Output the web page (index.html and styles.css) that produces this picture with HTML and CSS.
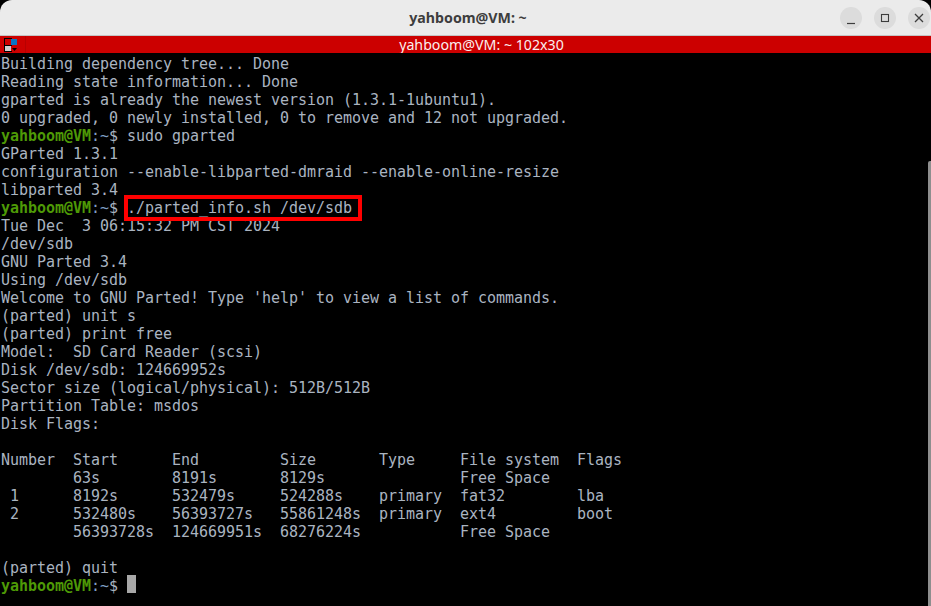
FILE: index.html
```html
<!DOCTYPE html>
<html lang="en">
<head>
<meta charset="utf-8">
<title>yahboom@VM: ~</title>
<link rel="stylesheet" href="styles.css">
</head>
<body>
<div class="window">
  <header class="titlebar">
    <div class="title">yahboom@VM: ~</div>
    <div class="controls">
      <button class="ctl"><svg width="16" height="16" viewBox="0 0 16 16"><path d="M4 13.5h8" stroke="#3d3d3d" stroke-width="1.2" fill="none"/></svg></button>
      <button class="ctl"><svg width="16" height="16" viewBox="0 0 16 16"><rect x="4.5" y="4.5" width="7" height="7" stroke="#3d3d3d" stroke-width="1.1" fill="none"/></svg></button>
      <button class="ctl"><svg width="16" height="16" viewBox="0 0 16 16"><path d="M4 4l8 8M12 4l-8 8" stroke="#3d3d3d" stroke-width="1.3" fill="none"/></svg></button>
    </div>
  </header>
  <div class="tabbar">
    <svg class="menu-icon" width="14" height="14" viewBox="0 0 14 14"><path d="M0 0h8v1H1v6h6v6h1v1H0z" fill="#000"/><path d="M1 7h7v1H1z" fill="#000"/><rect x="1" y="1" width="6" height="6" fill="#cc0000"/><rect x="7" y="1" width="6" height="6" fill="#0a74c4"/><rect x="1" y="8" width="6" height="5" fill="#cfcfcf"/><path d="M8 10h5l-2.5 3z" fill="#000"/></svg>
    <span class="tab-sep"></span>
    <span class="tab-title">yahboom@VM: ~ 102x30</span>
  </div>
  <main class="terminal">
    <div class="scrollbar"></div>
    <div class="output">
      <div class="line">Building dependency tree... Done</div>
      <div class="line">Reading state information... Done</div>
      <div class="line">gparted is already the newest version (1.3.1-1ubuntu1).</div>
      <div class="line">0 upgraded, 0 newly installed, 0 to remove and 12 not upgraded.</div>
      <div class="line"><span class="prompt">yahboom@VM</span><span class="path">:~</span><span>$ sudo gparted</span></div>
      <div class="line">GParted 1.3.1</div>
      <div class="line">configuration --enable-libparted-dmraid --enable-online-resize</div>
      <div class="line">libparted 3.4</div>
      <div class="line"><span class="prompt">yahboom@VM</span><span class="path">:~</span><span>$ </span><span class="mark">./parted_info.sh /dev/sdb</span></div>
      <div class="line">Tue Dec  3 06:15:32 PM CST 2024</div>
      <div class="line">/dev/sdb</div>
      <div class="line">GNU Parted 3.4</div>
      <div class="line">Using /dev/sdb</div>
      <div class="line">Welcome to GNU Parted! Type 'help' to view a list of commands.</div>
      <div class="line">(parted) unit s</div>
      <div class="line">(parted) print free</div>
      <div class="line">Model:  SD Card Reader (scsi)</div>
      <div class="line">Disk /dev/sdb: 124669952s</div>
      <div class="line">Sector size (logical/physical): 512B/512B</div>
      <div class="line">Partition Table: msdos</div>
      <div class="line">Disk Flags:</div>
      <div class="line"></div>
      <div class="line">Number  Start      End         Size       Type     File system  Flags</div>
      <div class="line">        63s        8191s       8129s               Free Space</div>
      <div class="line"> 1      8192s      532479s     524288s    primary  fat32        lba</div>
      <div class="line"> 2      532480s    56393727s   55861248s  primary  ext4         boot</div>
      <div class="line">        56393728s  124669951s  68276224s           Free Space</div>
      <div class="line"></div>
      <div class="line">(parted) quit</div>
      <div class="line"><span class="prompt">yahboom@VM</span><span class="path">:~</span><span>$ </span><span class="cursor"></span></div>
    </div>
  </main>
</div>
</body>
</html>
```

FILE: styles.css
```css
* { box-sizing: border-box; }
html, body { margin: 0; height: 100%; overflow: hidden; background: #000; }
.window { display: flex; flex-direction: column; height: 606px; width: 931px; }
.titlebar {
  height: 36px; flex: none; background: #ebebeb; border-bottom: 1px solid #c4c4c4;
  border-radius: 12px 12px 0 0; display: flex; align-items: center; justify-content: flex-end;
  position: relative; padding-right: 1px;
}
.title {
  position: absolute; left: 5px; right: 0; text-align: center;
  font: 700 14.2px "Noto Sans", "Open Sans", sans-serif; color: #3d3d3d;
}
.controls { display: flex; gap: 12px; position: relative; }
.ctl {
  width: 22px; height: 22px; border: 0; padding: 0; border-radius: 50%; background: #dcdcdc;
  display: flex; align-items: center; justify-content: center;
}
.tabbar {
  height: 17px; flex: none; background: #cc0000; display: flex; align-items: center; position: relative; padding-left: 4px;
}
.menu-icon { display: block; }
.tab-sep { width: 1px; height: 17px; background: #b80000; margin-left: 7px; }
.tab-title {
  position: absolute; left: 32px; right: 0; text-align: center; color: #fbeeee;
  font: 14.2px "Noto Sans", "Open Sans", sans-serif;
}
.terminal { flex: 1; background: #000; position: relative; overflow: hidden; }
.scrollbar { position: absolute; right: 0; top: 108px; bottom: 0; width: 3px; background: #8e8e8e; border-top-left-radius: 2px; }
.output {
  padding: 2px 0 0 1px; font: 15px/18px "DejaVu Sans Mono", monospace; letter-spacing: -0.03px; color: #aab4c0;
}
.line { height: 18px; white-space: pre; }
.prompt { color: #4e9a06; font-weight: 700; }
.path { color: #7f9fc4; }
.mark { position: relative; }
.mark::after {
  content: ""; position: absolute; top: -4px; bottom: -4px; left: -3px; right: -10px;
  border: 4px solid #f00;
}
.cursor { display: inline-block; width: 9px; height: 18px; background: #a8a8a8; vertical-align: top; margin-top: -2px; }
```
